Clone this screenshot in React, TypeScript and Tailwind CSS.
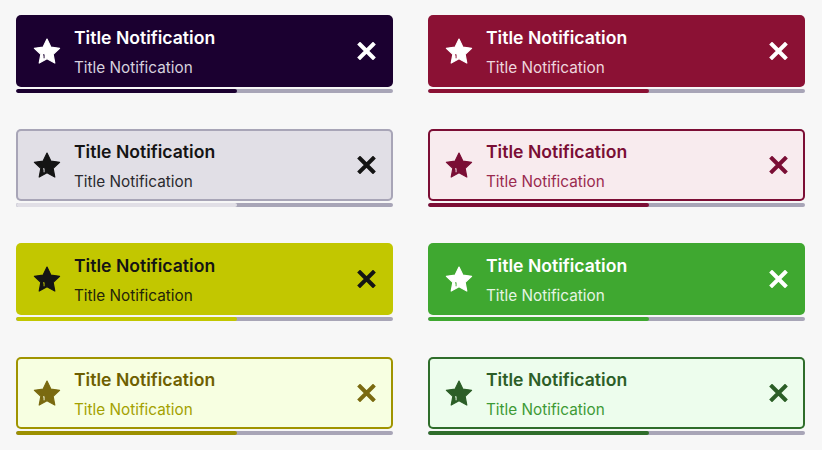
import React from "react";

type Variant = {
  card: string;
  title: string;
  sub: string;
  icon: string;
  mark: string;
  fill: string;
};

const variants: Variant[] = [
  { card: "bg-[#1b0030]", title: "text-white", sub: "text-[#d6d1de]", icon: "text-white", mark: "#1b0030", fill: "bg-[#1b0030]" },
  { card: "bg-[#8b1134]", title: "text-white", sub: "text-[#eed6de]", icon: "text-white", mark: "#8b1134", fill: "bg-[#8b1134]" },
  { card: "bg-[#e1dfe6] ring-2 ring-inset ring-[#a8a5b7]", title: "text-[#141414]", sub: "text-[#2a2a2e]", icon: "text-[#141414]", mark: "#e1dfe6", fill: "bg-[#e1dfe6]" },
  { card: "bg-[#f8ebee] ring-2 ring-inset ring-[#7c0e35]", title: "text-[#7a0e35]", sub: "text-[#9a2a4e]", icon: "text-[#7a0e35]", mark: "#f8ebee", fill: "bg-[#7c0e35]" },
  { card: "bg-[#c2c700]", title: "text-[#141414]", sub: "text-[#24250a]", icon: "text-[#141414]", mark: "#c2c700", fill: "bg-[#c2c700]" },
  { card: "bg-[#3fa830]", title: "text-white", sub: "text-[#e6f5e3]", icon: "text-white", mark: "#3fa830", fill: "bg-[#3fa830]" },
  { card: "bg-[#f7ffe1] ring-2 ring-inset ring-[#a09400]", title: "text-[#6e5f00]", sub: "text-[#a3a100]", icon: "text-[#7a6a10]", mark: "#f7ffe1", fill: "bg-[#9c9000]" },
  { card: "bg-[#edfded] ring-2 ring-inset ring-[#2f6d2b]", title: "text-[#2c5e27]", sub: "text-[#3d9a35]", icon: "text-[#2c5e27]", mark: "#edfded", fill: "bg-[#2f6d2b]" },
];

function Star({ mark }: { mark: string }) {
  return (
    <svg width="28" height="27" viewBox="0 0 24 23" className="shrink-0">
      <path
        d="M12 0.8l3.3 6.9 7.5 1-5.5 5.2 1.4 7.5L12 17.8l-6.7 3.6 1.4-7.5L1.2 8.7l7.5-1z"
        fill="currentColor"
        strokeLinejoin="round"
        stroke="currentColor"
        strokeWidth="1"
      />
      <path d="M8.6 14.6l0.9-0.5v3.2" fill="none" stroke={mark} strokeWidth="0.8" />
    </svg>
  );
}

function Close() {
  return (
    <svg width="19" height="18" viewBox="0 0 19 18" className="shrink-0">
      <path d="M3 2.5l13 13M16 2.5l-13 13" stroke="currentColor" strokeWidth="4" strokeLinecap="square" />
    </svg>
  );
}

function Toast({ v }: { v: Variant }) {
  return (
    <div className="w-[377px]">
      <div className={`h-[72px] rounded-[5px] flex items-center pl-[17px] pr-[17px] ${v.card}`}>
        <span className={v.icon}>
          <Star mark={v.mark} />
        </span>
        <div className="flex-1 ml-[13px] mt-[2px] flex flex-col">
          <span className={`text-[17.6px] leading-[22px] font-semibold ${v.title}`}>Title Notification</span>
          <span className={`text-[15.3px] leading-[20px] mt-[9px] ${v.sub}`}>Title Notification</span>
        </div>
        <span className={v.icon}>
          <Close />
        </span>
      </div>
      <div className="mt-[2px] h-[4px] rounded-full bg-[#a8a5b7] overflow-hidden">
        <div className={`h-full w-[58.5%] rounded-full ${v.fill}`} />
      </div>
    </div>
  );
}

export default function App() {
  return (
    <div
      className="w-[822px] h-[450px] bg-[#f7f7f7] pt-[15px] pl-[16px]"
      style={{ fontFamily: "Inter, 'Noto Sans', sans-serif" }}
    >
      <div className="grid grid-cols-[377px_377px] gap-x-[35px] gap-y-[36px]">
        {variants.map((v, i) => (
          <Toast key={i} v={v} />
        ))}
      </div>
    </div>
  );
}
